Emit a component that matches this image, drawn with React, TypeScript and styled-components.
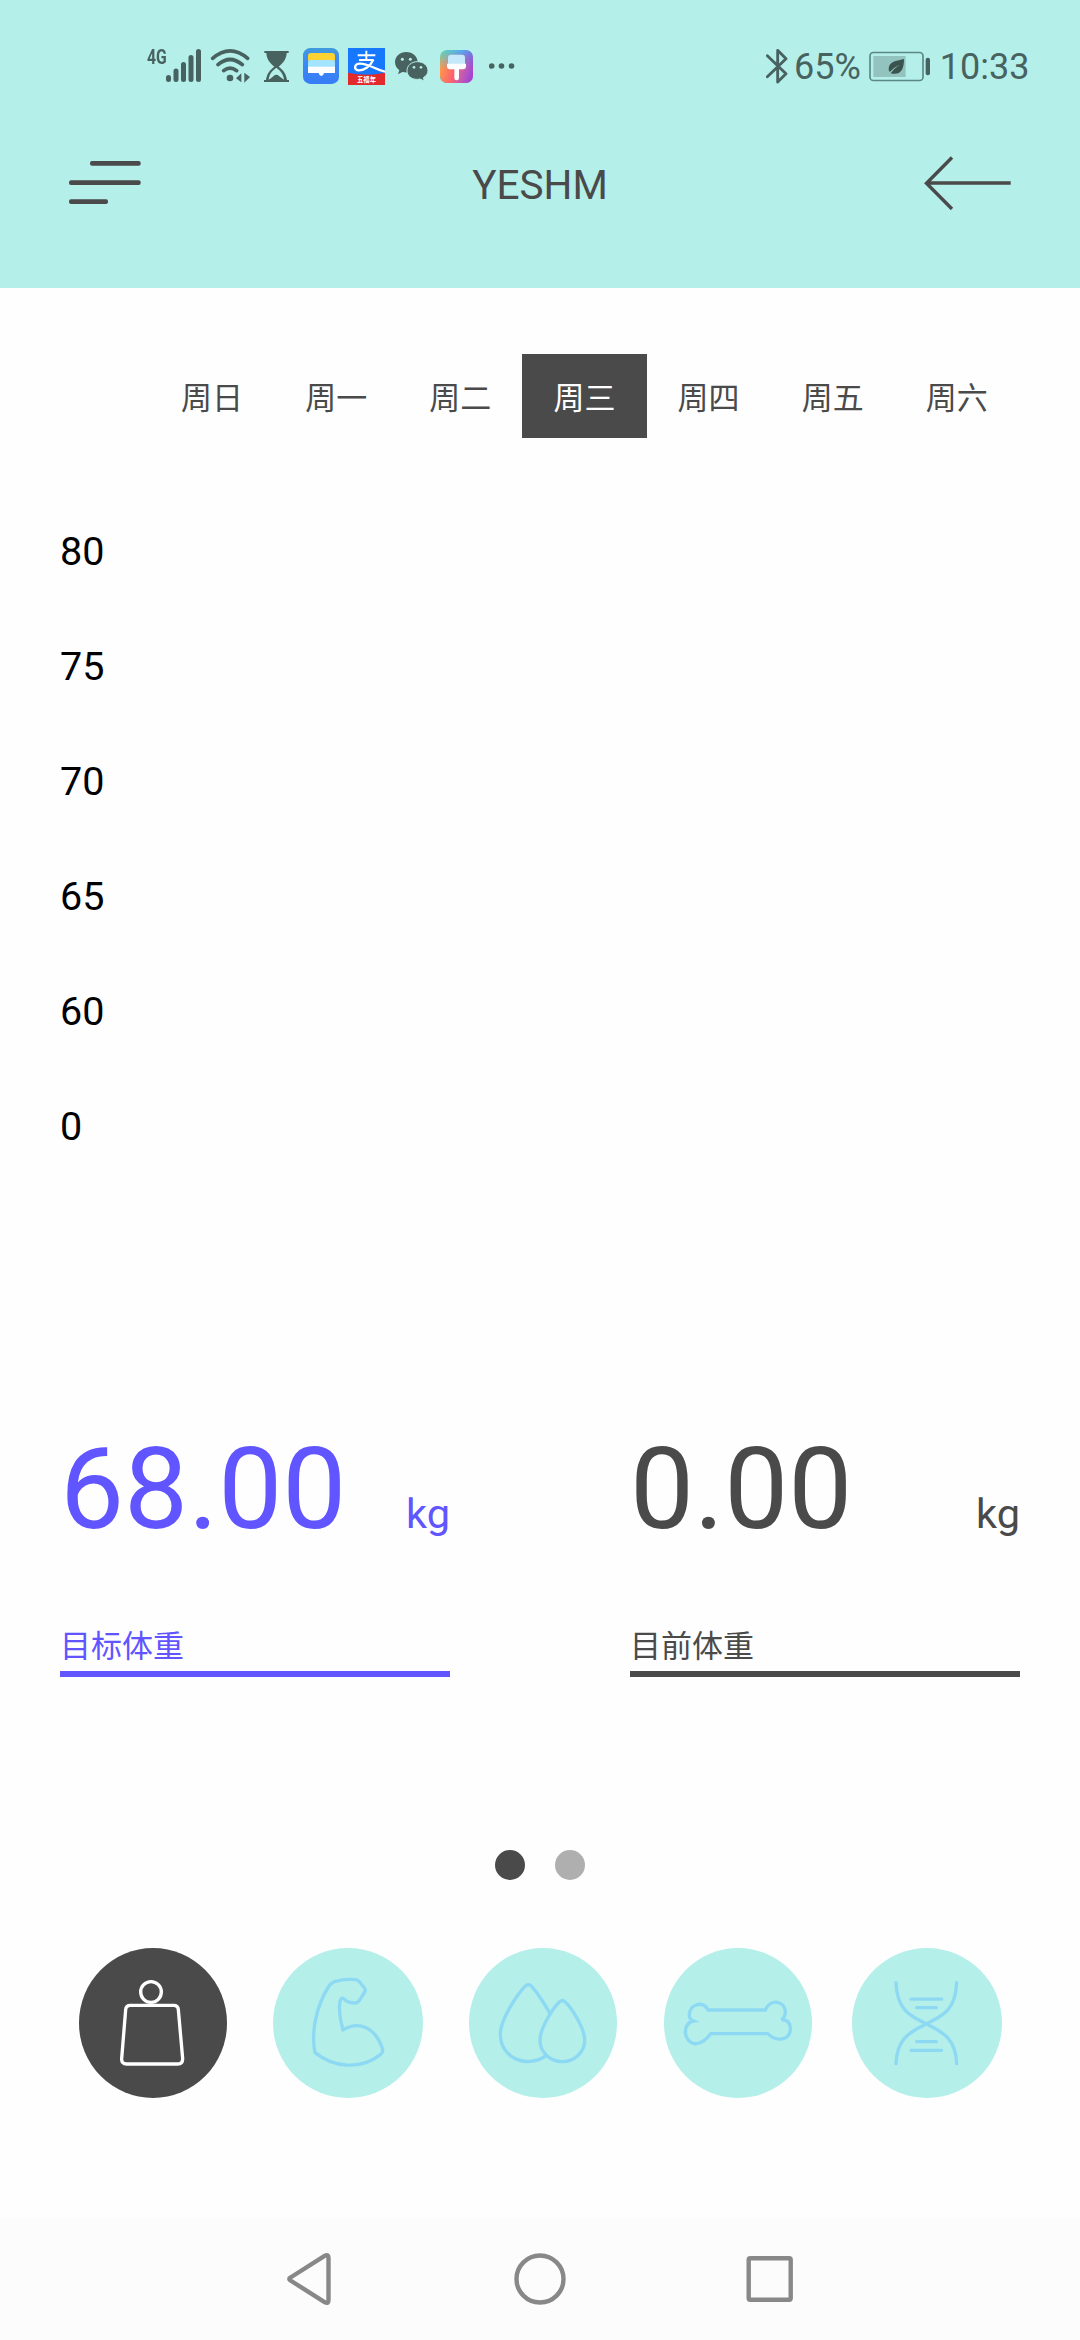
import React from "react";
import styled, { createGlobalStyle } from "styled-components";

const INK = "#4a4a4a";
const MINT = "#b4efea";
const SKY = "#8dd9f3";
const VIOLET = "#6055ff";
const STATUS = "#48625f";

const GlobalStyle = createGlobalStyle`
  html, body { margin: 0; padding: 0; background: #fefefe; }
  * { box-sizing: border-box; }
  body { font-family: Roboto, "Noto Sans CJK SC", sans-serif; }
  svg { display: block; flex: none; }
`;

const Screen = styled.div`
  width: 1080px;
  height: 2340px;
  display: flex;
  flex-direction: column;
  background: #fefefe;
  overflow: hidden;
`;

const Header = styled.header`
  height: 288px;
  background: ${MINT};
`;

const StatusBar = styled.div`
  height: 132px;
  padding: 0 50.5px 0 147px;
  display: flex;
  align-items: center;
  justify-content: space-between;
  color: ${STATUS};
`;

const StatusGroup = styled.div`
  display: flex;
  align-items: center;
`;

const StatusIcon = styled.svg<{ $gap?: number }>`
  height: 40px;
  margin-left: ${(p) => p.$gap ?? 0}px;
`;

const Network = styled.span`
  width: 19px;
  height: 36px;
  font: 700 21px/19px Roboto, sans-serif;
  letter-spacing: 0;
  transform: scaleX(0.75);
  transform-origin: left;
`;

const StatusText = styled.span<{ $gap: number }>`
  font-size: 36px;
  line-height: 42px;
  margin-left: ${(p) => p.$gap}px;
  padding-top: 2px;
`;

const TitleBar = styled.div`
  height: 102px;
  padding: 0 68px;
  display: grid;
  grid-template-columns: 1fr auto 1fr;
  align-items: center;
`;

const Title = styled.h1`
  margin: 0;
  padding-top: 3px;
  font-size: 40.5px;
  line-height: 48px;
  font-weight: 400;
  color: ${INK};
`;

const BackSlot = styled.div`
  justify-self: end;
`;

const Week = styled.nav`
  margin: 66px 61px 0 150px;
  height: 84px;
  display: grid;
  grid-template-columns: repeat(7, 124.14px);
`;

const Day = styled.button<{ $active: boolean }>`
  border: 0;
  padding: 0;
  font: 400 31px/84px "Noto Sans CJK SC", sans-serif;
  text-align: center;
  background: ${(p) => (p.$active ? INK : "transparent")};
  color: ${(p) => (p.$active ? "#fff" : INK)};
`;

const Axis = styled.ul`
  list-style: none;
  margin: 56px 0 0;
  padding: 0 0 0 60px;
  height: 690px;
  display: flex;
  flex-direction: column;
`;

const Tick = styled.li`
  height: 115px;
  font-size: 39.5px;
  line-height: 115px;
  color: #000;
`;

const Stats = styled.section`
  margin: 235px 60px 0;
  display: grid;
  grid-template-columns: 390px 390px;
  justify-content: space-between;
`;

const Stat = styled.div<{ $color: string }>`
  color: ${(p) => p.$color};
  border-bottom: 6px solid ${(p) => p.$color};
  height: 258px;
  display: flex;
  flex-direction: column;
  justify-content: space-between;
`;

const StatValue = styled.div`
  display: flex;
  align-items: baseline;
  justify-content: space-between;
  font-size: 114px;
  line-height: 140px;
`;

const Unit = styled.span`
  font-size: 41.5px;
  line-height: 50px;
`;

const StatLabel = styled.div`
  font: 400 31px/44px "Noto Sans CJK SC", sans-serif;
  padding-bottom: 5px;
`;

const Pager = styled.div`
  margin-top: 173px;
  display: flex;
  justify-content: center;
  gap: 30px;
`;

const Dot = styled.span<{ $on: boolean }>`
  width: 30px;
  height: 30px;
  border-radius: 50%;
  background: ${(p) => (p.$on ? INK : "#afafaf")};
`;

const Metrics = styled.nav`
  margin: 68px 78px 0 79px;
  display: grid;
  grid-template-columns: 148px 150px 148px 148px 150px;
  column-gap: 46px;
`;

const Metric = styled.button<{ $active?: boolean; $shift?: number }>`
  height: 150px;
  border: 0;
  padding: 0;
  border-radius: 50%;
  margin: 0 ${(p) => p.$shift ?? 0}px 0 ${(p) => -(p.$shift ?? 0)}px;
  background: ${(p) => (p.$active ? INK : MINT)};
  color: ${(p) => (p.$active ? "#fff" : SKY)};

  svg {
    width: 100%;
    height: 150px;
    fill: none;
    stroke: currentColor;
    stroke-width: 10;
    stroke-linecap: round;
    stroke-linejoin: round;
  }
`;

const SystemNav = styled.footer`
  margin-top: auto;
  height: 122px;
  background: #fcfcfc;
  display: flex;
  justify-content: center;
  align-items: center;
  gap: 170px;

  svg {
    fill: none;
    stroke: #888;
    stroke-width: 4.4;
    stroke-linejoin: round;
  }
`;

const SignalIcon = () => (
  <StatusIcon width="35" viewBox="166 46 35 40" stroke="currentColor" strokeWidth="5" strokeLinecap="round">
    <path d="M168.5 77.5v2M176 71v8.500M183.500 64.500v15M191 57.500v22M198.500 51.500v28" />
  </StatusIcon>
);

const WifiIcon = () => (
  <StatusIcon $gap={9} width="40" viewBox="240 48 120 120" fill="none" stroke="currentColor" strokeWidth="11" strokeLinecap="round">
    <path d="M248 85Q300 40 353 85M264 104Q300 73 337 104M281 122Q300 107 320 122" />
    <circle cx="300" cy="144" r="10" fill="currentColor" stroke="none" />
    <path d="M318 145l16-15v27zM343 128v30l17-17z" fill="currentColor" stroke="none" />
  </StatusIcon>
);

const HourglassIcon = () => (
  <StatusIcon $gap={14} width="25" viewBox="402 48 75 120" fill="currentColor">
    <path d="M403 63h73v6h-6c-1 19-10 29-24 41 14 10 23 22 25 40h6v6h-75v-6h6c2-18 11-30 25-40-14-12-23-22-24-41h-6z" />
    <path d="M439 113c-13 9-22 21-23 36 5-3 10-7 15-11 5-5 11-5 16 0 5 4 10 8 15 11-1-15-10-27-23-36z" fill={MINT} />
    <path d="M414 152c10-2 14-10 20-14q5-4 10 0c7 5 12 12 21 14z" />
  </StatusIcon>
);

const WalletIcon = () => (
  <StatusIcon $gap={14} width="36" viewBox="39 48 108 120">
    <defs>
      <linearGradient id="wallet" x1="0" y1="0" x2="0" y2="1">
        <stop offset="0" stopColor="#419bdc" />
        <stop offset=".35" stopColor="#3c8cf2" />
        <stop offset="1" stopColor="#377cf6" />
      </linearGradient>
    </defs>
    <rect x="39" y="54" width="108" height="108" rx="22" fill="url(#wallet)" />
    <path d="M54 92V78q0-9 9-9h63q9 0 9 9v14z" fill="#fdd231" />
    <path d="M54 114V97q0-7 9-7h63q9 0 9 7v17z" fill="#a3e4fe" />
    <path d="M54 110h81v19h-33q-2 9-8 9t-8-9H54z" fill="#fff" />
  </StatusIcon>
);

const BadgeText = styled.text`
  font: 700 19px "Noto Sans CJK SC", sans-serif;
  fill: #fff;
`;

const AlipayIcon = () => (
  <StatusIcon $gap={9} width="37" viewBox="174 48 111 120">
    <rect x="174" y="54" width="111" height="111" fill="#1677ff" />
    <path d="M174 128q55 12 111 0v37H174z" fill="#e2292b" />
    <g fill="none" stroke="#fff" strokeWidth="6">
      <path d="M203 76h53M229 62v27M207 90h44" />
      <path d="M250 89C240 110 222 122 205 121C190 119 193 101 210 101C235 101 255 118 285 125" strokeWidth="7" />
    </g>
    <BadgeText x="201" y="156">五福年</BadgeText>
  </StatusIcon>
);

const WechatIcon = () => (
  <StatusIcon $gap={10} width="33" viewBox="315 48 99 120">
    <path d="M349 66c-20 0-34 14-34 31 0 10 5 18 13 24l-4 12 13-7c28 6 46-8 46-29 0-18-15-31-34-31z" fill="currentColor" />
    <path d="M382 95c-18 0-31 12-31 27 0 18 18 30 39 25l13 6-3-10c8-5 14-12 14-21 0-15-13-27-32-27z" fill="currentColor" stroke={MINT} strokeWidth="3" />
    <g fill={MINT}>
      <circle cx="337" cy="88" r="4.500" /><circle cx="361" cy="88" r="4.500" />
      <circle cx="372" cy="112" r="4" /><circle cx="393" cy="112" r="4" />
    </g>
  </StatusIcon>
);

const ThemeIcon = () => (
  <StatusIcon $gap={12} width="33" viewBox="450 48 99 120">
    <defs>
      <linearGradient id="themeTop" x1="0" y1=".2" x2="1" y2=".7">
        <stop offset="0" stopColor="#63d0b8" />
        <stop offset=".45" stopColor="#58a9ee" />
        <stop offset="1" stopColor="#8a43dd" />
      </linearGradient>
      <linearGradient id="themeWarm" x1="0" y1=".5" x2="1" y2=".8">
        <stop offset="0" stopColor="#ff9c48" />
        <stop offset=".45" stopColor="#fb5f72" />
        <stop offset="1" stopColor="#d441c2" stopOpacity=".3" />
      </linearGradient>
      <linearGradient id="themeFade" x1="0" y1="0" x2="0" y2="1">
        <stop offset=".05" stopColor="#000" />
        <stop offset=".6" stopColor="#fff" />
      </linearGradient>
      <mask id="themeMask"><rect x="450" y="60" width="99" height="99" fill="url(#themeFade)" /></mask>
    </defs>
    <rect x="450" y="60" width="99" height="99" rx="21" fill="url(#themeTop)" />
    <rect x="450" y="60" width="99" height="99" rx="21" fill="url(#themeWarm)" mask="url(#themeMask)" />
    <path d="M474 102V83q0-9 9-9h33q9 0 9 9v19z" fill="#c5e9fa" />
    <path d="M471 101h57v8q0 9-9 9h-12v27q0 6-7 6t-7-6v-27h-13q-9 0-9-9z" fill="#fff" />
  </StatusIcon>
);

const MoreIcon = () => (
  <StatusIcon $gap={16} width="26" viewBox="489 46 26 40" fill="currentColor">
    <circle cx="491.700" cy="66" r="2.800" /><circle cx="501.500" cy="66" r="2.800" /><circle cx="511.500" cy="66" r="2.800" />
  </StatusIcon>
);

const BluetoothIcon = () => (
  <StatusIcon width="22" viewBox="47 48 66 120" fill="none" stroke="currentColor" strokeWidth="8.500" strokeLinejoin="round" strokeLinecap="round">
    <path d="M51 77l56 54-25 25V61l25 25-56 54" />
  </StatusIcon>
);

const BatteryIcon = () => (
  <StatusIcon $gap={8} width="62" viewBox="355 48 186 120">
    <rect x="358" y="67.500" width="159" height="84" rx="10" fill="none" stroke="#5b8883" strokeWidth="5" />
    <rect x="368" y="78" width="97" height="63" fill="#92c3bf" />
    <path d="M460 87c-18 5-46 6-46 30q0 6 3 9 12-14 30-22-16 10-27 26c32 8 40-15 40-43z" fill="#3b534f" />
    <rect x="525" y="83" width="13" height="53" rx="6" fill="#48625f" />
  </StatusIcon>
);

const MenuIcon = () => (
  <svg width="74" height="46" viewBox="68 160 74 46" fill={INK}>
    <rect x="90" y="161" width="50.700" height="4.800" rx="2" />
    <rect x="69" y="180.200" width="71.700" height="4.800" rx="2" />
    <rect x="69" y="199.300" width="39" height="4.800" rx="2" />
  </svg>
);

const BackIcon = () => (
  <svg width="90" height="54" viewBox="922 156 90 54" fill="none" stroke={INK} strokeWidth="3.400">
    <path d="M1010.700 183H926M952 157.500L926.500 183.200 952 209" />
  </svg>
);

const WeightIcon = () => (
  <svg viewBox="57 384 444 450">
    <circle cx="273" cy="516" r="31" />
    <path d="M211 556H341Q354 556 355 569L368 716Q368 732 353 732H200Q184 732 185 716L197 569Q198 556 211 556Z" />
  </svg>
);

const MuscleIcon = () => (
  <svg viewBox="639 384 450 450">
    <path d="M765 698C753 640 767 560 807 498Q812 491 823 485Q855 476 887 479Q894 480 899 486L914 505Q918 511 913 518L898 541Q893 549 884 549Q862 549 851 536Q844 531 841 541C834 565 841 600 849 630C895 602 945 620 967 685Q971 695 962 703C900 752 820 742 765 698Z" />
  </svg>
);

const DropsIcon = () => (
  <svg viewBox="87 384 444 450">
    <path d="M328 577C310 545 288 514 275 499Q265 489 255 499C230 525 181 600 181 642C181 714 258 747 317 708" />
    <path d="M359 545Q367 538 375 545C395 563 434 625 434 660C434 698 403 725 367 725C331 725 300 698 300 660C300 625 339 563 359 545Z" />
  </svg>
);

const BoneIcon = () => (
  <svg viewBox="672 384 444 450">
    <path strokeLinejoin="miter" d="M804 570H976C991 534 1036 542 1036 577Q1035 593 1024 599C1045 599 1051 613 1051 627C1050 660 1011 668 983 641H812C783 679 752 680 739 650C731 627 742 606 760 603Q747 598 748 583C749 551 791 541 804 570Z" />
  </svg>
);

const DnaIcon = () => (
  <svg viewBox="96 84 450 450">
    <path d="M228 188C231 275 277 290 319 312C361 334 407 350 410 431M410 188C407 275 361 290 319 312C277 334 231 350 228 431" />
    <path d="M273 237.500H365M290 263H349M290 365H349M273 391H365" />
  </svg>
);

const days = ["周日", "周一", "周二", "周三", "周四", "周五", "周六"];
const ticks = ["80", "75", "70", "65", "60", "0"];
const stats = [
  { value: "68.00", label: "目标体重", color: VIOLET },
  { value: "0.00", label: "目前体重", color: INK },
];
const metrics = [
  { name: "weight", Icon: WeightIcon, shift: 0 },
  { name: "muscle", Icon: MuscleIcon, shift: 0 },
  { name: "water", Icon: DropsIcon, shift: 0 },
  { name: "bone", Icon: BoneIcon, shift: -1 },
  { name: "dna", Icon: DnaIcon, shift: 5 },
];

export default function App() {
  return (
    <>
      <GlobalStyle />
      <Screen>
        <Header>
          <StatusBar>
            <StatusGroup>
              <Network>4G</Network>
              <SignalIcon />
              <WifiIcon />
              <HourglassIcon />
              <WalletIcon />
              <AlipayIcon />
              <WechatIcon />
              <ThemeIcon />
              <MoreIcon />
            </StatusGroup>
            <StatusGroup>
              <BluetoothIcon />
              <StatusText $gap={6}>65%</StatusText>
              <BatteryIcon />
              <StatusText $gap={9}>10:33</StatusText>
            </StatusGroup>
          </StatusBar>
          <TitleBar>
            <MenuIcon />
            <Title>YESHM</Title>
            <BackSlot>
              <BackIcon />
            </BackSlot>
          </TitleBar>
        </Header>
        <Week>
          {days.map((day) => (
            <Day key={day} $active={day === "周三"}>{day}</Day>
          ))}
        </Week>
        <Axis>
          {ticks.map((tick) => (
            <Tick key={tick}>{tick}</Tick>
          ))}
        </Axis>
        <Stats>
          {stats.map((s) => (
            <Stat key={s.label} $color={s.color}>
              <StatValue>
                <span>{s.value}</span>
                <Unit>kg</Unit>
              </StatValue>
              <StatLabel>{s.label}</StatLabel>
            </Stat>
          ))}
        </Stats>
        <Pager>
          <Dot $on />
          <Dot $on={false} />
        </Pager>
        <Metrics>
          {metrics.map(({ name, Icon, shift }) => (
            <Metric key={name} aria-label={name} $active={name === "weight"} $shift={shift}>
              <Icon />
            </Metric>
          ))}
        </Metrics>
        <SystemNav>
          <svg width="60" height="60" viewBox="280 2249 60 60">
            <path d="M290.500 2277.500L325 2255.700Q328.500 2254 328.500 2258V2300Q328.500 2304 325 2302.300L290.500 2280.500Q288 2279 290.500 2277.500Z" />
          </svg>
          <svg width="60" height="60" viewBox="510 2249 60 60">
            <circle cx="540" cy="2279" r="23.500" />
          </svg>
          <svg width="60" height="60" viewBox="739.500 2249 60 60">
            <rect x="748.200" y="2258.200" width="42" height="41.500" rx="1.500" />
          </svg>
        </SystemNav>
      </Screen>
    </>
  );
}
